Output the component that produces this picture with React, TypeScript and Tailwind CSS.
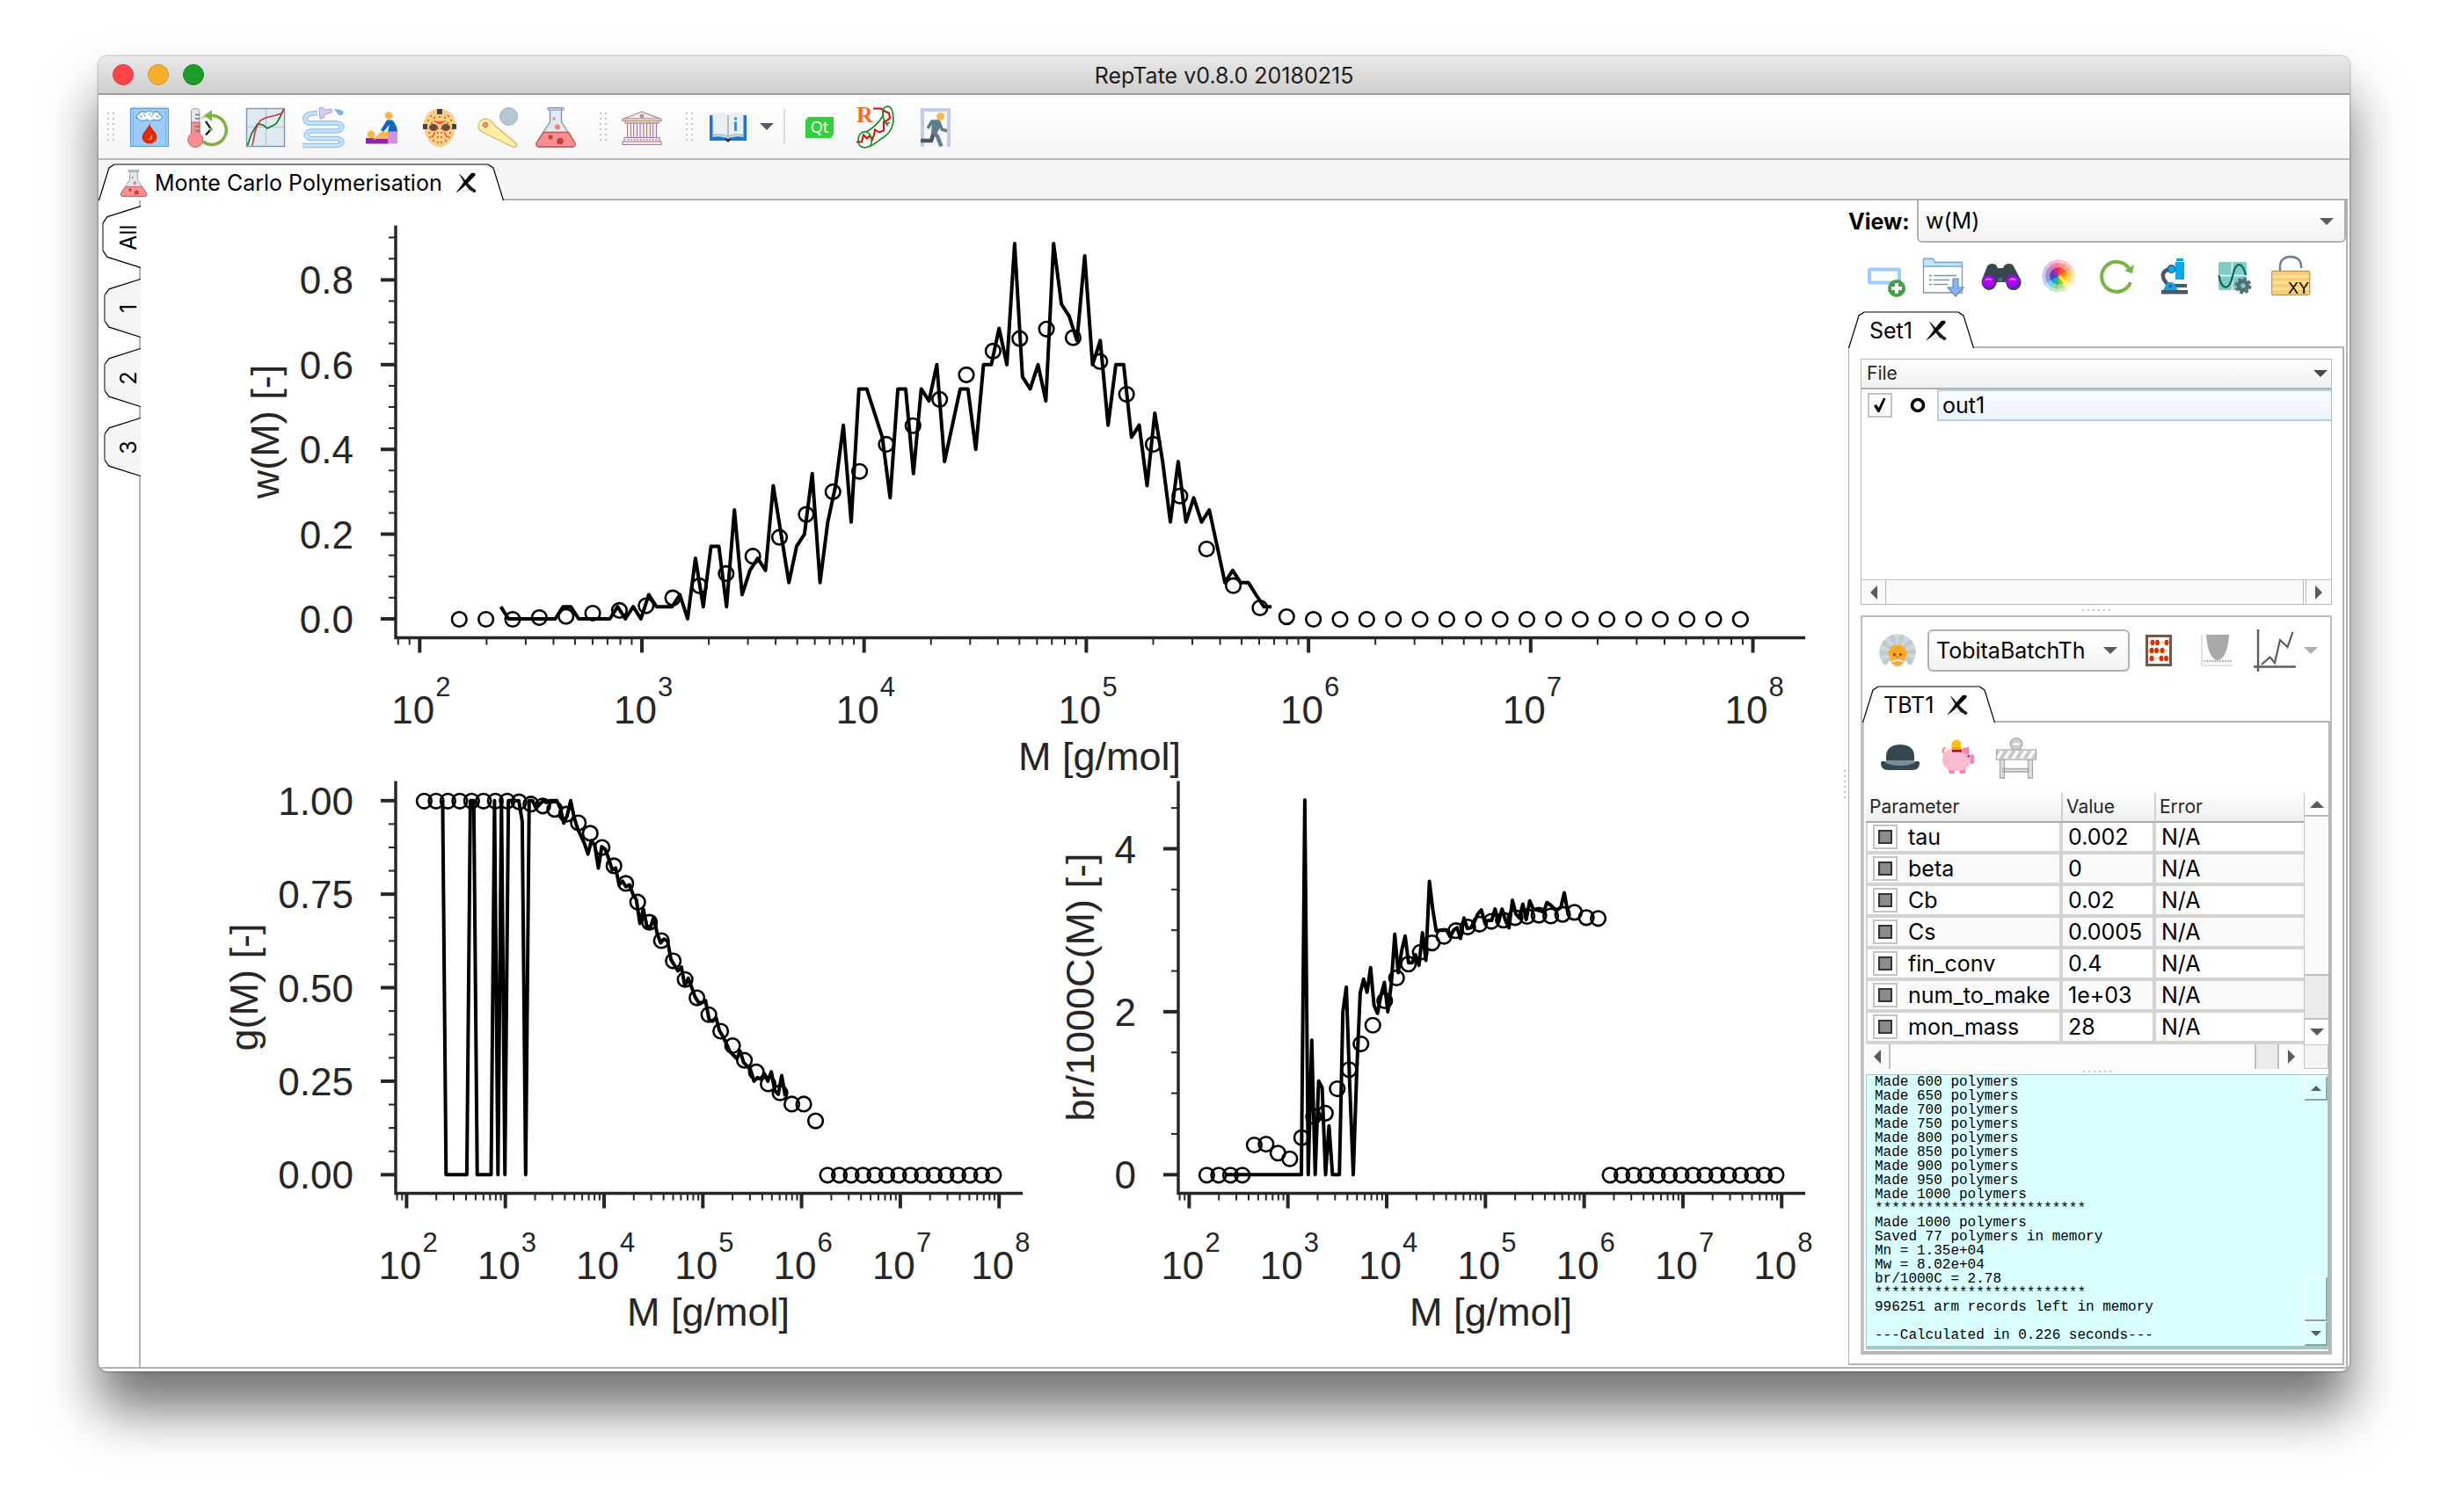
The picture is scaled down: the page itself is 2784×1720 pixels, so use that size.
import React from "react";

const UI = "font-[Inter,sans-serif]";

/* ------------------------------------------------------------------ */
/* Chart data                                                          */
/* ------------------------------------------------------------------ */

const LINE_START = 2.365;
const LINE_STEP = 0.03504;
const MARK_START = 2.178;
const MARK_STEP = 0.12012;
const BIN = 0.02857;

const zeros = (n: number) => Array.from({ length: n }, () => 0);

const wLine = [
  1, 0, 0, 0, 0, 0, 0, 0, 1, 1, 0, 0, 0, 0, 0, 1, 0, 1, 0, 2, 1, 1, 1, 2, 0, 5, 1, 6, 6, 1, 9, 2, 4, 5, 4, 11, 7, 3, 6, 7,
  12, 3, 8, 11, 16, 8, 19, 19, 17, 15, 10, 19, 19, 12, 19, 18, 21, 13, 16, 19, 19, 14, 21, 21, 24, 21, 31, 20, 19, 21, 18,
  31, 26, 25, 23, 30, 21, 23, 16, 21, 21, 15, 16, 11, 17, 13, 8, 13, 8, 10, 8, 9, 6, 3, 4, 3, 3, 2, 1, 1,
].map((n) => n * BIN);

const wMarks = [
  0, 0, 0, 0.004, 0.007, 0.0145, 0.021, 0.032, 0.0505, 0.079, 0.108, 0.149, 0.1936, 0.2476, 0.301, 0.349, 0.413, 0.457,
  0.519, 0.577, 0.633, 0.6625, 0.685, 0.6646, 0.6086, 0.531, 0.413, 0.291, 0.166, 0.0795, 0.027, 0.006, ...zeros(17),
];

const gLine = [
  1, 0, 0, 0, 0, 0, 0, 0, 1, 1, 0, 0, 0, 0, 0, 1, 0, 1, 0, 1, 1, 1, 1, 0.945, 0, 1, 1, 0.98, 0.99, 1, 0.995, 1, 1, 1, 0.98,
  0.94, 0.96, 1, 0.955, 0.925, 0.905, 0.885, 0.857, 0.893, 0.88, 0.82, 0.877, 0.87, 0.845, 0.815, 0.82, 0.775, 0.785, 0.77,
  0.775, 0.75, 0.735, 0.672, 0.71, 0.665, 0.66, 0.688, 0.645, 0.62, 0.63, 0.625, 0.575, 0.56, 0.545, 0.555, 0.505, 0.525,
  0.5, 0.475, 0.46, 0.46, 0.465, 0.415, 0.41, 0.42, 0.385, 0.37, 0.35, 0.33, 0.32, 0.31, 0.33, 0.3, 0.29, 0.28, 0.25, 0.26,
  0.255, 0.27, 0.25, 0.275, 0.225, 0.215, 0.265, 0.21,
];

const gMarks = [
  1, 1, 1, 1, 1, 1, 1, 1, 0.998, 0.992, 0.987, 0.978, 0.965, 0.942, 0.914, 0.876, 0.827, 0.78, 0.73, 0.676, 0.627, 0.573,
  0.523, 0.474, 0.429, 0.385, 0.346, 0.307, 0.276, 0.244, 0.22, 0.19, 0.19, 0.145, ...zeros(15),
];

const bLine = [
  ...zeros(23), 4.6, 0, 1.65, 0, 1.15, 1.07, 0, 0.6, 0, 0, 0, 2, 2.3, 1.1, 0, 1.25, 2.23, 2.4, 2.24, 2.54, 2.08, 1.98, 2.2,
  2.36, 2, 2.35, 2.95, 2.48, 2.75, 2.93, 2.6, 2.6, 2.7, 2.57, 2.97, 2.63, 3.6, 3.25, 2.99, 3, 3, 3, 2.92, 3, 3.03, 2.9,
  3.15, 3.02, 3.03, 3.1, 3.2, 3.25, 3.1, 3.12, 3.12, 3.26, 3.1, 3.26, 3.12, 3.03, 3.37, 3.2, 3.15, 3.32, 3.13, 3.36, 3.26,
  3.25, 3.24, 3.22, 3.34, 3.31, 3.27, 3.25, 3.28, 3.46, 3.22,
];

const bMarks = [
  0, 0, 0, 0, 0.37, 0.38, 0.27, 0.2, 0.46, 0.72, 0.76, 1.06, 1.295, 1.61, 1.84, 2.14, 2.42, 2.59, 2.735, 2.85, 2.93, 3,
  3.045, 3.08, 3.115, 3.13, 3.16, 3.175, 3.19, 3.18, 3.2, 3.225, 3.16, 3.15, ...zeros(15),
];

type PlotProps = {
  left: number;
  right: number;
  top: number;
  bottom: number;
  x2: number;
  decade: number;
  y0: number;
  unit: number;
  ticks: string[];
  minor: number;
  minorCount: number;
  line: number[];
  marks: number[];
  yLabel: string;
  yLabelX: number;
  tickX: number;
};

const INK = "#262626";

function Plot(p: PlotProps) {
  const px = (log: number) => p.x2 + (log - 2) * p.decade;
  const py = (v: number) => p.y0 - v * p.unit;
  const minorX: number[] = [Math.log10(80), Math.log10(90)];
  for (let d = 2; d < 8; d++) for (let m = 2; m < 10; m++) minorX.push(d + Math.log10(m));
  const midX = (p.left + p.right) / 2;
  const midY = (p.top + p.bottom) / 2;
  return (
    <g>
      <path
        d={"M" + p.line.map((v, i) => `${px(LINE_START + i * LINE_STEP).toFixed(1)} ${py(v).toFixed(1)}`).join("L")}
        fill="none"
        stroke="#000"
        strokeWidth={4}
        strokeLinejoin="round"
      />
      {p.marks.map((v, i) => (
        <circle key={i} cx={px(MARK_START + i * MARK_STEP)} cy={py(v) + 0.5} r={8.3} fill="none" stroke="#000" strokeWidth={2.6} />
      ))}
      <path d={`M${p.left} ${p.top}V${p.bottom}H${p.right}`} fill="none" stroke={INK} strokeWidth={3.4} />
      {minorX.map((l) => (
        <path key={l} d={`M${px(l)} ${p.bottom}v8`} stroke={INK} strokeWidth={2} />
      ))}
      {Array.from({ length: p.minorCount }, (_, i) => (
        <path key={i} d={`M${p.left} ${py(i * p.minor)}h-8`} stroke={INK} strokeWidth={2} />
      ))}
      {[2, 3, 4, 5, 6, 7, 8].map((e) => (
        <g key={e} fill={INK}>
          <path d={`M${px(e)} ${p.bottom}v17`} stroke={INK} strokeWidth={4} />
          <text x={px(e) - 32} y={p.bottom + 97} fontSize={44}>10</text>
          <text x={px(e) + 18} y={p.bottom + 66} fontSize={31}>{e}</text>
        </g>
      ))}
      {p.ticks.map((t) => (
        <g key={t} fill={INK}>
          <path d={`M${p.left} ${py(Number(t))}h-17`} stroke={INK} strokeWidth={4} />
          <text x={p.tickX} y={py(Number(t)) + 16} fontSize={44} textAnchor="end">{t}</text>
        </g>
      ))}
      <text x={midX - 1} y={p.bottom + 150} fontSize={45} textAnchor="middle" fill={INK}>M [g/mol]</text>
      <text transform={`translate(${p.yLabelX} ${midY}) rotate(-90)`} fontSize={45} textAnchor="middle" fill={INK}>
        {p.yLabel}
      </text>
    </g>
  );
}

function Figure() {
  return (
    <svg viewBox="160 228 1934 1326" className="h-full w-full font-['Liberation_Sans',Arial,sans-serif]" role="img" aria-label="Molecular weight distribution, g-factor and branching plots">
      <Plot left={450} right={2053} top={256} bottom={725} x2={477.3} decade={252.7} y0={703.5} unit={482}
        ticks={["0.0", "0.2", "0.4", "0.6", "0.8"]} minor={0.05} minorCount={19} line={wLine} marks={wMarks}
        yLabel="w(M) [-]" yLabelX={317} tickX={402} />
      <Plot left={450} right={1163} top={888} bottom={1357} x2={462.4} decade={112.3} y0={1335.8} unit={425.5}
        ticks={["0.00", "0.25", "0.50", "0.75", "1.00"]} minor={0.0625} minorCount={17} line={gLine} marks={gMarks}
        yLabel="g(M) [-]" yLabelX={293} tickX={402} />
      <Plot left={1340} right={2053} top={888} bottom={1357} x2={1352.4} decade={112.3} y0={1335.8} unit={92.7}
        ticks={["0", "2", "4"]} minor={0.5} minorCount={10} line={bLine} marks={bMarks}
        yLabel="br/1000C(M) [-]" yLabelX={1244} tickX={1292} />
    </svg>
  );
}

/* ------------------------------------------------------------------ */
/* Icons                                                               */
/* ------------------------------------------------------------------ */

function Icon({ children, className = "h-12 w-12" }: { children: React.ReactNode; className?: string }) {
  return (
    <svg viewBox="0 0 48 48" className={`overflow-visible ${className}`} fill="none" aria-hidden="true">
      {children}
    </svg>
  );
}

const WaxIcon = () => (
  <Icon>
    <rect x="3" y="1.5" width="42" height="4" fill="#c5dcf3" />
    <rect x="2.5" y="3.5" width="43" height="43" fill="#99ccfd" stroke="#5f9bd6" />
    <path d="M5.500 4v42M42.500 4v42" stroke="#7fb5ec" />
    <path d="M11 15c-3-1-2-5 1-5 0-3 5-4 7-2 3-2 7-2 9 0 4-2 8 0 8 3 3 0 3 4 0 5-2 2-6 1-7 0-2 2-6 2-8 0-3 2-8 2-10-1z" fill="#fff" stroke="#5d93cc" strokeWidth="1.200" />
    <path d="M17 9l3 4M29 9l-3 4M24 8v3M13 13l3-1M35 13l-4-1" stroke="#5d93cc" />
    <path d="M24 20.500c2 7 8.500 10 8.500 15.500a8.500 7.500 0 0 1-17 0c0-5.500 6.500-8.500 8.500-15.500z" fill="#dd2c00" />
    <path d="M26 33c0 3-1 5-4 6 4 1 7-2 4-6z" fill="#ff8a65" />
  </Icon>
);

const ThermoIcon = () => (
  <Icon>
    <path d="M17 15a15 15 0 0 1 9-4" stroke="#c5e1a5" strokeWidth="3.500" />
    <path d="M28 11.500a16.300 16.500 0 1 1-9 29.500" stroke="#7cb342" strokeWidth="3.500" />
    <path d="M20 11.500l9-6.500v13z" fill="#7cb342" />
    <path d="M22 18l6 9-6 6.500" stroke="#111" strokeWidth="2.200" />
    <circle cx="28" cy="27" r="2" fill="#7cb342" />
    <path d="M5.500 6a4.800 3 0 0 1 9.500 0v26h-9.500z" fill="#dfe9f1" stroke="#8a9cb0" />
    <path d="M5.500 19h9.500v13a8.500 8.500 0 1 1-9.500 0z" fill="#f78f8f" stroke="#cf6060" />
    <path d="M10 10.500h5M10 15h5M10 24h5M10 29h5" stroke="#7a6f85" strokeWidth="1.500" />
  </Icon>
);

const CurvesIcon = () => (
  <Icon>
    <rect x="2.500" y="3.500" width="43" height="43" fill="#dfe9f0" stroke="#8095aa" strokeWidth="1.400" />
    <path d="M24.500 4v42M3 24.500h42" stroke="#b9cbd9" strokeWidth="1.500" />
    <path d="M3.500 45.500L8 32l7-11 6 1 5 4 10-5 4-7 5-10" stroke="#0a7a18" strokeWidth="1.600" />
    <path d="M9 45.500L13 26l5-9 6-3 12-3 6-2 3-5" stroke="#c8373c" strokeWidth="1.600" />
  </Icon>
);

const HoseIcon = () => (
  <Icon>
    {[["#8fb8df", 5.6], ["#bfe4ff", 3.6]].map(([c, w]) => (
      <path key={c} d="M17 8.500C8 9 3 10 3 15s4 5 8 5h27c9 0 9 9 0 9H11c-9 0-9 8.500 0 8.500h27c9 0 9 8 0 8H0" stroke={c as string} strokeWidth={w as number} />
    ))}
    <path d="M19 3l4-1 2 3 8-1v4l-8 2-1 4-4 1z" fill="#d8cdf0" stroke="#a99bcb" />
    <path d="M36 4c5 0 11 1 10.500 4.500S41 12 40 9z" fill="#82aef0" />
  </Icon>
);

const MassageIcon = () => (
  <Icon>
    <circle cx="32" cy="11.500" r="4.400" fill="#ffb74d" />
    <path d="M30 16.500l6 0c3 3 6 8 6 13.500H31l2-8-7 8-3-2z" fill="#1565c0" />
    <rect x="6" y="37" width="26" height="6.500" fill="#8e24aa" />
    <rect x="31" y="29.500" width="11" height="14" fill="#ce93d8" />
    <circle cx="12" cy="33" r="4.400" fill="#ffb74d" />
    <path d="M17 36l6-6h8v8H19l-5 1z" fill="#ffb74d" />
  </Icon>
);

const MaskIcon = () => (
  <Icon>
    <path d="M24 4c12 0 18.500 8 18 19-.5 12-8 24-18 24S6.500 35 6 23C5.500 12 12 4 24 4z" fill="#ffcc80" />
    <path d="M21 4h6v6h-6zM5 21h5v6H5zM38 21h5v6h-5z" fill="#37474f" />
    <ellipse cx="17" cy="25" rx="5" ry="4" fill="#6d4c41" />
    <ellipse cx="31" cy="25" rx="5" ry="4" fill="#6d4c41" />
    <path d="M16 17l8 4.500 8-4.500-8 1.500zM18.500 30l1 1-4 6-1-1zM29.500 30l-1 1 4 6 1-1z" fill="#f44336" />
    <g fill="#8a6a4a">
      {[[14, 12], [18, 14], [30, 14], [34, 12], [11, 17], [37, 17], [15, 20], [33, 20], [22, 26], [26, 26], [22, 31], [26, 31], [12, 31], [36, 31], [22, 36], [26, 36], [17, 40], [31, 40], [22, 42], [26, 42], [24, 13], [13, 36], [35, 36]].map(([x, y]) => (
        <circle key={`${x}-${y}`} cx={x} cy={y} r="1" />
      ))}
    </g>
  </Icon>
);

const BatIcon = () => (
  <Icon>
    <path d="M2 24c0-6 6-11 12-8 3 2 5 4 7 7l24 20c2 3-1 5-4 4L10 32c-5-2-8-4-8-8z" fill="#fff0a3" stroke="#c6b57a" strokeWidth="1.200" />
    <circle cx="10" cy="22" r="2.800" fill="#f48f8f" stroke="#cf6060" />
    <circle cx="36.500" cy="12.500" r="10" fill="#b4c7d5" stroke="#9bb0c1" />
  </Icon>
);

const FlaskIcon = ({ className }: { className?: string }) => (
  <Icon className={className}>
    <path d="M17.500 4v14.500L2.500 42c-1.500 3 0 5 3 5h37c3 0 4.500-2 3-5L30.500 18.500V4z" fill="#dfe9f1" stroke="#8194a8" strokeWidth="1.300" />
    <path d="M10 30.500h28.500L45.500 42c1.500 3 0 5-3 5h-37c-3 0-4.500-2-3-5z" fill="#f79090" stroke="#c55252" strokeWidth="1.300" />
    <path d="M15 2.500h18v2.500H15z" fill="#c3d0db" stroke="#8194a8" />
    <circle cx="22" cy="15" r="1.800" fill="#f48080" />
    <circle cx="26" cy="24.500" r="3" fill="#f48080" />
    <circle cx="18" cy="36" r="2.500" fill="#c83c3c" />
    <circle cx="29" cy="40.500" r="3.800" fill="#c83c3c" />
  </Icon>
);

const MuseumIcon = () => (
  <Icon>
    <g fill="#fbebcb" stroke="#9a79b5" strokeWidth="1.100">
      <path d="M2 15.500L24 7l22 8.500v2H2z" />
      <path d="M4 15h40" />
      <circle cx="24" cy="12" r="1.800" fill="#b9a1d6" />
      <path d="M5 17.500h38v2.500H5z" />
      {[7.500, 14.500, 22, 29.500, 36.500].map((x) => (
        <rect key={x} x={x} y="20" width="4" height="16.500" />
      ))}
      <path d="M4 36.500h40v4.500H4zM2 41h44v3.500H2z" />
    </g>
    <path d="M8 38.800h33" stroke="#9a79b5" strokeWidth="1.600" strokeDasharray="1.300 2.200" />
  </Icon>
);

const BookIcon = () => (
  <Icon>
    <rect x="3" y="11" width="42" height="29" fill="#1976d2" />
    <path d="M21 36h6v3.500l-3 2.500-3-2.500z" fill="#263238" />
    <path d="M6.500 8.500C12 7 20 8 24 11c4-3 12-4 17.500-2.500V36C36 34.500 28 35 24 38c-4-3-12-3.500-17.500-2z" fill="#eceff1" />
    <path d="M24 11v27" stroke="#b0bec5" strokeWidth="2" />
    <path d="M6.500 34c6-1 14-1 17.500 2 3.500-3 11.500-3 17.500-2" stroke="#b0bec5" strokeWidth="2" />
    <circle cx="32.500" cy="15" r="1.700" fill="#2196f3" />
    <path d="M32.500 18.500V29" stroke="#2196f3" strokeWidth="3" />
  </Icon>
);

const QtIcon = () => (
  <Icon>
    <path d="M11 13h29v20l-3 4H8V17z" fill="#2fd13c" />
    <text x="24" y="31" textAnchor="middle" fontSize="18" fill="#fff" className="font-['Noto_Sans',sans-serif]">Qt</text>
  </Icon>
);

const RepTateIcon = () => (
  <Icon>
    <text x="0" y="19" fontSize="26" fontWeight="bold" fill="#ff6a1a" className="font-['Liberation_Serif',serif]">R</text>
    <path d="M19 3.500h9l4 3 5 2 1 6-4 3-3 1v10l-5 2-5-3-1 6-2 5-3-4-3 3-4-4-2 8H0" stroke="#dd0a0a" strokeWidth="2" />
    <path d="M11 30c8-4 14-10 19-18 0-8 1-11 6-11 5 1 6 8 6 17-1 8-5 14-11 18-8 5-12 11-22 12-5-1-7-3-7-8 0-6 3-11 9-10 5 1 8 9 5 15" stroke="#0c8a16" strokeWidth="1.600" />
    <path d="M30 4c0 8 0 14 6 19M34 20h4" stroke="#0c8a16" strokeWidth="1.600" />
  </Icon>
);

const ExitIcon = () => (
  <Icon>
    <path d="M9 47V5h30v42" stroke="#c5cae9" strokeWidth="4" />
    <path d="M22 31l-3 9H7" stroke="#455a64" strokeWidth="4.500" />
    <path d="M28 18l-8 0-5 8M28 19l3 8 6 2" stroke="#607d8b" strokeWidth="3.600" />
    <path d="M20 17h9l1 6-4 8-7 1z" fill="#607d8b" />
    <path d="M21 30l5 5 4.500 11.500" stroke="#607d8b" strokeWidth="4.500" />
    <circle cx="29.500" cy="12.500" r="4.600" fill="#ffb74d" />
  </Icon>
);

const AddDataIcon = () => (
  <Icon>
    <rect x="5" y="15.500" width="34" height="15" rx="1" stroke="#9accff" strokeWidth="4" />
    <circle cx="36" cy="37" r="10" fill="#43a047" />
    <path d="M36 31v12M30 37h12" stroke="#fff" strokeWidth="4" />
  </Icon>
);

const FolderIcon = () => (
  <Icon>
    <path d="M.5 8V3.500h11l2 4h31V42H.5z" fill="#fff" stroke="#8094ad" strokeWidth="1.300" />
    <path d="M.5 12V3.500h11l2 4h31V12z" fill="#c4e6ff" stroke="#7ba6d6" strokeWidth="1.300" />
    <path d="M12 22.500h26M12 27.500h18M12 32.500h16" stroke="#8094ad" strokeWidth="1.600" />
    <path d="M7 22.500h3M7 27.500h3M7 32.500h3" stroke="#8094ad" strokeWidth="1.600" />
    <path d="M34 26h6v10h6l-9 10-9-10h6z" fill="#8ab4f0" stroke="#5a86c8" strokeWidth="1.200" />
  </Icon>
);

const BinocularsIcon = () => (
  <Icon>
    <path d="M7 12c1-4 10-4 11 0l1 2h6l1-2c1-4 10-4 11 0l8 15c2 6-2 12-8 12s-8-4-9-9h-10c-1 5-4 9-9 9s-10-6-8-12z" fill="#37474f" />
    <circle cx="22" cy="27" r="2.500" fill="#546e7a" />
    <circle cx="8.500" cy="29" r="7.300" fill="#aa00ff" />
    <circle cx="36" cy="29" r="7.300" fill="#aa00ff" />
    <path d="M5 28c1-2 5-3 7 0M32.500 28c1-2 5-3 7 0" stroke="#ea80fc" strokeWidth="1.600" />
  </Icon>
);

const WHEEL = ["#f44336", "#ff5722", "#ff9800", "#ffc107", "#ffeb3b", "#8bc34a", "#4caf50", "#03a9f4", "#3f51b5", "#673ab7", "#9c27b0", "#e91e63"];
const wedge = (i: number, r: number) => {
  const a = ((i * 30 - 90) * Math.PI) / 180;
  const b = a + Math.PI / 6;
  return `M22 23L${22 + r * Math.cos(a)} ${23 + r * Math.sin(a)}L${22 + r * Math.cos(b)} ${23 + r * Math.sin(b)}Z`;
};
const WheelIcon = () => (
  <Icon>
    {[[19, 0.3], [15, 0.4], [10, 1]].map(([r, o]) =>
      WHEEL.map((c, i) => <path key={`${r}-${c}`} d={wedge(i, r)} fill={c} opacity={o} />),
    )}
  </Icon>
);

const ReloadIcon = () => (
  <Icon>
    <path d="M36 14a17 17 0 1 0 2 16" stroke="#7cb342" strokeWidth="4" />
    <path d="M42 10l-2 10-9-3z" fill="#7cb342" />
  </Icon>
);

const MicroscopeIcon = () => (
  <Icon>
    <path d="M19 15c-8 0-11 5-10 9 1 5 4 6 5 9" stroke="#455a64" strokeWidth="4.500" />
    <path d="M24 3h8v3h-8zM23 7h10v20H23z" fill="#03a9f4" />
    <circle cx="18.500" cy="15" r="4.300" fill="#03a9f4" stroke="#455a64" strokeWidth="1.500" />
    <path d="M20 32h16v4H20zM7 39h30v4.500H7z" fill="#455a64" />
    <path d="M14 30h6l6 9H9z" fill="#03a9f4" />
    <circle cx="17" cy="34.500" r="2" fill="#455a64" />
  </Icon>
);

const SignalIcon = () => (
  <Icon>
    <rect x="6" y="7" width="32" height="32" rx="2" fill="#80cbc4" />
    <path d="M21.500 7v32M6 22.500h32" stroke="#fff" strokeWidth="1.400" />
    <path d="M6.500 22c3 18 12 18 15.500 1s11-17 15-1" stroke="#00695c" strokeWidth="2.200" />
    <circle cx="34" cy="34" r="8" stroke="#546e7a" strokeWidth="3" strokeDasharray="3.600 2.680" />
    <circle cx="34" cy="34" r="5" stroke="#546e7a" strokeWidth="5" />
    <circle cx="34" cy="34" r="2.600" fill="#80cbc4" />
  </Icon>
);

const LockIcon = () => (
  <Icon>
    <path d="M10 17v-5C10 5 15 1 22 1s12 4 12 11v2" stroke="#66809b" strokeWidth="2.500" />
    <rect x=".7" y="17.500" width="43" height="27" rx="1.500" fill="#ffe08f" stroke="#b8975a" strokeWidth="1.300" />
    <path d="M1.500 20h41.500M1.500 27h41.500M1.500 34h41.500M1.500 41h41.500" stroke="#f5cb78" strokeWidth="3.500" />
    <text x="19" y="43" fontSize="18" fill="#000" className="font-['Liberation_Sans',sans-serif]">XY</text>
  </Icon>
);

const EinsteinIcon = () => (
  <Icon>
    {Array.from({ length: 15 }, (_, i) => (
      <path key={i} d="M24 26L20 6.500Q24 3.500 28 6.500Z" transform={`rotate(${i * 18 - 126} 24 26)`} fill={i % 2 ? "#cfd8dc" : "#bfcbd1"} />
    ))}
    <path d="M15 24c0-5 4-6 9-6s9 1 9 6c3 1 2 6 0 6 0 7-4 12-9 12s-9-5-9-12c-2 0-3-5 0-6z" fill="#ffa726" />
    <circle cx="20.500" cy="28.500" r="1.500" fill="#784719" />
    <circle cx="27.500" cy="28.500" r="1.500" fill="#784719" />
    <path d="M17 37c1-4 13-4 14 0-3 1-4-1-7-1s-4 2-7 1z" fill="#eceff1" />
    <path d="M21 30l3 3 3-3z" fill="#ef8a14" />
  </Icon>
);

const AbacusIcon = () => (
  <Icon>
    <rect x="10.500" y="7.500" width="27" height="33" fill="#fff" stroke="#795548" strokeWidth="3" />
    {[[15, [17, 22.500, 33]], [24, [16, 21.500, 28]], [33, [16, 27, 32.500]]].map(([y, xs]) => (
      <g key={y as number}>
        <path d={`M12 ${y}h24`} stroke="#ffcc80" strokeWidth="1.600" />
        {(xs as number[]).map((x) => (
          <ellipse key={x} cx={x} cy={y as number} rx="2.400" ry="3.200" fill="#dd2c00" />
        ))}
      </g>
    ))}
  </Icon>
);

const FitLimitsIcon = () => (
  <Icon>
    <path d="M7 6v35h35" stroke="#e2e2e2" strokeWidth="2" />
    <path d="M12 6h26c-1 17-6 29-13 29S13 23 12 6z" fill="#a9a9a9" />
    <path d="M9 36h32" stroke="#b5b5b5" strokeWidth="2" strokeDasharray="2 1" />
  </Icon>
);

const LineChartIcon = () => (
  <Icon>
    <path d="M5 0v48M0 42.500h48" stroke="#5c5c5c" strokeWidth="2.400" />
    <path d="M9 40l9.500-8.500L24 38l6-26 8.500 8 6-17" stroke="#5c5c5c" strokeWidth="2.200" />
  </Icon>
);

const HatIcon = () => (
  <Icon>
    <path d="M2 30c0-3 4-2 7-1h30c3-1 7-2 7 1 0 5-3 8-8 8H10c-5 0-8-3-8-8z" fill="#37474f" />
    <path d="M8 29V22C8 13 15 9 24 9s16 4 16 13v7z" fill="#37474f" />
    <path d="M8 27h32v3c-8 4-24 4-32 0z" fill="#78909c" />
  </Icon>
);

const PigIcon = () => (
  <Icon>
    <path d="M9 19c-4-1-3-6 1-6" stroke="#ff80ab" strokeWidth="2" />
    <path d="M12 35h8v7h-6zM24 35h8v7h-6z" fill="#ff80ab" />
    <path d="M6 26c0-9 7-13 15-13 6 0 9 1 12 3 4 2 6 5 7 9v5c-3 1-4 2-6 5-3 3-8 4-13 4-8 0-15-4-15-13z" fill="#f8bbd0" />
    <path d="M28 15c2-3 5-3 8-3v8c-3 1-6-1-8-5z" fill="#ff80ab" />
    <rect x="38" y="20" width="4" height="11" rx="2" fill="#ff80ab" />
    <rect x="34.500" y="21" width="2.500" height="2.500" fill="#3f51b5" />
    <path d="M17 15h11v2.500H17z" fill="#880e4f" />
    <path d="M16.500 9a5.500 5.500 0 0 1 11 0v6h-11z" fill="#ffc107" />
    <path d="M17 12h10v3H17z" fill="#ff9800" />
  </Icon>
);

const BarrierIcon = () => (
  <Icon>
    <g fill="#e0e0e0" stroke="#a8a8a8" strokeWidth="1.300">
      <path d="M9 36.500h29v3.500H9zM5.500 26h5v21h-5zM37.500 26h5v21h-5z" />
      <circle cx="24" cy="8.500" r="6.800" fill="#cfcfcf" />
      <rect x="1.500" y="15" width="45" height="11" fill="#fff" />
    </g>
    <path d="M20.500 8.500h7" stroke="#fff" strokeWidth="2.200" />
    <path d="M2 15.600h4l-4 7zM10 15.600h5l-6 9.800H4zM19 15.600h5l-6 9.800h-5zM28 15.600h5l-6 9.800h-5zM37 15.600h5l-6 9.800h-5zM46 17v8.400h-6z" fill="#c9c9c9" />
  </Icon>
);

const CloseGlyph = () => (
  <svg viewBox="0 0 26 24" className="h-6 w-[26px]" fill="none" aria-hidden="true">
    <path d="M5 1.500C8 3 18 17 24 20c1 1 0 3-2 3-5 0-12-12-17-21.500z" fill="#1c1c1c" />
    <path d="M19 1c3-1 6 0 4 3C16 11 8 20 1 23.500 6 18 12 8 19 1z" fill="#000" />
    <path d="M9 22c4-2 8-2 12 .5" stroke="#ddd" strokeWidth="1.200" />
  </svg>
);

/* ------------------------------------------------------------------ */
/* Small parts                                                         */
/* ------------------------------------------------------------------ */

function Grip() {
  return (
    <span className="grid grid-cols-2 gap-1" aria-hidden="true">
      {Array.from({ length: 12 }, (_, i) => (
        <span key={i} className="size-0.5 bg-[#c4c4c4]" />
      ))}
    </span>
  );
}

function Dots({ vertical = false }: { vertical?: boolean }) {
  return (
    <span className={vertical ? "flex flex-col gap-1" : "flex gap-1"} aria-hidden="true">
      {Array.from({ length: 6 }, (_, i) => (
        <span key={i} className="size-0.5 bg-[#c4c4c4]" />
      ))}
    </span>
  );
}

const ARROWS = { down: "M0 4h16l-8 8z", up: "M0 12h16L8 4z", left: "M12 0v16L4 8z", right: "M4 0v16l8-8z" };
function Arrow({ dir, className = "size-4 fill-[#5b5b5b]" }: { dir: keyof typeof ARROWS; className?: string }) {
  return (
    <svg viewBox="0 0 16 16" className={className} aria-hidden="true">
      <path d={ARROWS[dir]} />
    </svg>
  );
}

function ToolButton({ label, children }: { label: string; children: React.ReactNode }) {
  return (
    <button type="button" aria-label={label} title={label} className="flex w-[66px] shrink-0 items-center justify-center">
      {children}
    </button>
  );
}

function FolderTab({ label, icon }: { label: string; icon?: React.ReactNode }) {
  return (
    <div className="relative z-10 -mb-0.5 flex h-[42px]" role="tablist">
      <svg viewBox="0 0 18 42" className="h-full w-[18px]" aria-hidden="true">
        <path d="M.5 42L12 5l6-4v41z" fill="#fff" />
        <path d="M.5 42L12 5l6-4" fill="none" stroke="#000" strokeWidth="1.200" />
      </svg>
      <div className="flex items-center gap-3.5 border-t-2 border-[#808080] bg-white pr-3 pl-1.5">
        <button type="button" role="tab" aria-selected="true" className="flex items-center gap-2 text-[25px] leading-8">
          {icon}
          {label}
        </button>
        <button type="button" aria-label={`Close ${label}`}>
          <CloseGlyph />
        </button>
      </div>
      <svg viewBox="0 0 18 42" className="h-full w-[18px]" aria-hidden="true">
        <path d="M0 1l6 4 11.500 37H0z" fill="#fff" />
        <path d="M0 1l6 4 11.500 37" fill="none" stroke="#000" strokeWidth="1.200" />
      </svg>
    </div>
  );
}

function SideTab({ label, active = false }: { label: string; active?: boolean }) {
  return (
    <button type="button" role="tab" aria-selected={active} className={active ? "relative h-[71px] w-11" : "relative h-[67px] w-11"}>
      <svg viewBox="0 0 44 68" preserveAspectRatio="none" className="absolute inset-0 h-full w-full" aria-hidden="true">
        <path d={active ? "M44 0L6 11 1 18v32l5 7 38 11z" : "M44 0L8 12 3 19v30l5 7 36 12z"} fill={active ? "#fff" : "#f5f5f5"} />
        <path d={active ? "M44 .5L6 12 1 19M1 49l5 7 38 11.500" : "M44 .5L8 12 3 19M3 49l5 7 36 11.500"} fill="none" stroke="#000" strokeWidth="1.200" />
        <path d={active ? "M1 19v30" : "M3 19v30"} stroke="#808080" strokeWidth="2" />
      </svg>
      <span className="absolute inset-0 flex items-center justify-center pl-4 text-[25px] leading-7">
        <span className="-rotate-90">{label}</span>
      </span>
    </button>
  );
}

const LINE = "border-[#b2b2b2]";

/* ------------------------------------------------------------------ */
/* Dock panels                                                         */
/* ------------------------------------------------------------------ */

function FileTree() {
  return (
    <section className="flex h-[280px] flex-col border border-[#b8b8b8] bg-white">
      <table className="w-full border-separate border-spacing-0 text-left">
        <thead>
          <tr>
            <th colSpan={3} scope="col" className="h-[34px] border-b-2 border-[#b0b0b0] bg-gradient-to-b from-white to-[#f0f0f0] p-0 font-normal">
              <span className="flex items-center justify-between pr-1 pl-1.5 text-[21px] leading-7 text-[#262626]">
                File
                <Arrow dir="down" className="size-4 fill-[#4a4a4a]" />
              </span>
            </th>
          </tr>
        </thead>
        <tbody>
          <tr className="text-[25px] leading-8">
            <td className="w-[86px] p-0">
              <span className="flex items-center gap-5 pl-[7px]">
                <span className="relative flex">
                  <input type="checkbox" defaultChecked aria-label="Show out1" className="size-7 appearance-none border-2 border-[#c2c2c2] bg-white" />
                  <svg viewBox="0 0 28 28" className="pointer-events-none absolute inset-0" aria-hidden="true">
                    <path d="M7 14.500l3-1.500 2.500 4L18 5.500l2.500 1L13.500 22h-2z" fill="#000" />
                  </svg>
                </span>
                <svg viewBox="0 0 18 18" className="size-[18px]" aria-hidden="true">
                  <circle cx="9" cy="9" r="6.500" fill="none" stroke="#000" strokeWidth="3.600" />
                </svg>
              </span>
            </td>
            <td className="h-9 border-2 border-r-0 border-[#b9d0ea] bg-gradient-to-b from-[#f8fbff] to-[#eaf3fd] py-0 pl-1">out1</td>
          </tr>
        </tbody>
      </table>
      <div className="mt-auto flex h-7 items-stretch border-t border-[#c4c4c4] bg-gradient-to-b from-[#f8f8f8] to-[#fcfcfc]">
        <button type="button" aria-label="Scroll left" className="flex w-7 items-center justify-center border-r border-[#b8b8b8]">
          <Arrow dir="left" />
        </button>
        <span className="flex-1" />
        <span className="w-1 border-x border-[#b8b8b8]" />
        <button type="button" aria-label="Scroll right" className="flex w-7 items-center justify-center">
          <Arrow dir="right" />
        </button>
      </div>
    </section>
  );
}

const PARAMETERS: [string, string][] = [
  ["tau", "0.002"],
  ["beta", "0"],
  ["Cb", "0.02"],
  ["Cs", "0.0005"],
  ["fin_conv", "0.4"],
  ["num_to_make", "1e+03"],
  ["mon_mass", "28"],
];

function ParameterTable() {
  const th = "h-[34px] border-b-2 border-b-[#a9a9a9] bg-gradient-to-b from-white to-[#efefef] p-0 pl-1 text-[21px] leading-7 font-normal text-[#262626]";
  const td = "h-9 border-b-4 border-[#d3d3d3] p-0 pl-1.5";
  return (
    <div className="grid grid-cols-[1fr_28px]">
      <table className="w-full table-fixed border-separate border-spacing-0 text-left">
        <thead>
          <tr>
            <th scope="col" className={`${th} w-[224px] border-r-2 border-r-[#d0d0d0]`}>Parameter</th>
            <th scope="col" className={`${th} w-[106px] border-r-2 border-r-[#d0d0d0]`}>Value</th>
            <th scope="col" className={th}>Error</th>
          </tr>
        </thead>
        <tbody className="text-[25px] leading-8">
          {PARAMETERS.map(([name, value], i) => (
            <tr key={name} className={i % 2 ? "bg-[#fafafa]" : "bg-white"}>
              <td className="h-9 border-r-4 border-b-4 border-l-2 border-[#d3d3d3] p-0 pl-1.5">
                <label className="flex items-center gap-3">
                  <span className="relative flex">
                    <input type="checkbox" className="size-7 appearance-none border-2 border-[#c4c4c4] bg-white" />
                    <span className="pointer-events-none absolute inset-1.5 border-2 border-[#333] bg-[#8a8a8a]" />
                  </span>
                  {name}
                </label>
              </td>
              <td className={`${td} border-r-4`}>{value}</td>
              <td className={td}>N/A</td>
            </tr>
          ))}
        </tbody>
      </table>
      <div className="flex flex-col border-l border-[#c4c4c4] bg-[#fafafa]">
        <button type="button" aria-label="Scroll up" className="flex h-[27px] items-center justify-center border-b-2 border-[#b8b8b8] bg-white">
          <Arrow dir="up" />
        </button>
        <span className="flex-1" />
        <span className="h-[52px] border-y-2 border-[#c0c0c0] bg-[#ebebeb]" />
        <button type="button" aria-label="Scroll down" className="flex h-7 items-center justify-center bg-white">
          <Arrow dir="down" />
        </button>
      </div>
      <div className="flex h-7 items-stretch bg-[#fbfbfb]">
        <button type="button" aria-label="Scroll left" className="flex w-7 items-center justify-center border-r-2 border-[#c0c0c0]">
          <Arrow dir="left" />
        </button>
        <span className="flex-1" />
        <span className="w-7 border-x-2 border-[#c0c0c0] bg-[#ebebeb]" />
        <button type="button" aria-label="Scroll right" className="flex w-7 items-center justify-center">
          <Arrow dir="right" />
        </button>
      </div>
      <span className="border border-[#c4c4c4] bg-[#f5f5f5]" />
    </div>
  );
}

const LOG = `Made 600 polymers
Made 650 polymers
Made 700 polymers
Made 750 polymers
Made 800 polymers
Made 850 polymers
Made 900 polymers
Made 950 polymers
Made 1000 polymers
*************************
Made 1000 polymers
Saved 77 polymers in memory
Mn = 1.35e+04
Mw = 8.02e+04
br/1000C = 2.78
*************************
996251 arm records left in memory

---Calculated in 0.226 seconds---`;

function Console() {
  const box = "border-2 border-t-white border-l-white border-r-[#8fb0b0] border-b-[#8fa0a0]";
  return (
    <section className="flex min-h-0 flex-1 border border-b-4 border-[#a3c8c8] bg-[#d9ffff]">
      <pre className="min-w-0 flex-1 overflow-hidden pl-[9px] font-['Liberation_Mono','Courier_New',monospace] text-base leading-4 text-black">{LOG}</pre>
      <div className="flex w-[27px] flex-col">
        <button type="button" aria-label="Scroll log up" className={`mt-px flex h-7 items-center justify-center ${box}`}>
          <Arrow dir="up" className="size-3 fill-[#54605f]" />
        </button>
        <span className="flex-1" />
        <span className={`h-[51px] ${box}`} />
        <button type="button" aria-label="Scroll log down" className={`flex h-7 items-center justify-center ${box}`}>
          <Arrow dir="down" className="size-3 fill-[#54605f]" />
        </button>
      </div>
    </section>
  );
}

function TheoryPanel() {
  return (
    <section className="flex min-h-0 flex-1 flex-col border-2 border-[#bdbdbd] bg-white">
      <div className="flex h-[76px] items-center">
        <div className="flex w-[74px] justify-end pr-2.5">
          <button type="button" aria-label="New theory"><EinsteinIcon /></button>
        </div>
        <div className="relative">
          <select aria-label="Theory" className="h-12 w-[230px] appearance-none rounded-md border-2 border-[#b0b0b0] bg-gradient-to-b from-white to-[#f3f3f3] pl-2 text-[25px] leading-8">
            <option>TobitaBatchTh</option>
          </select>
          <Arrow dir="down" className="pointer-events-none absolute top-4 right-3.5 size-4 fill-[#5b5b5b]" />
        </div>
        <ToolButton label="Calculate"><AbacusIcon /></ToolButton>
        <ToolButton label="Minimize"><FitLimitsIcon /></ToolButton>
        <ToolButton label="Limits"><LineChartIcon /></ToolButton>
        <button type="button" aria-label="Limits menu"><Arrow dir="down" className="size-4 fill-[#b0b0b0]" /></button>
      </div>
      <div className="mt-0.5 flex">
        <FolderTab label="TBT1" />
      </div>
      <div className="flex min-h-0 flex-1 flex-col border-2 border-[#b4b4b4] border-l-[#c4c4c4] pb-0.5 pl-0.5">
        <div className="flex h-20 shrink-0 items-stretch pl-1.5">
          <ToolButton label="Theory options"><HatIcon /></ToolButton>
          <ToolButton label="Save"><PigIcon /></ToolButton>
          <ToolButton label="Stop"><BarrierIcon /></ToolButton>
        </div>
        <ParameterTable />
        <div className="flex h-1.5 shrink-0 items-center justify-center"><Dots /></div>
        <Console />
      </div>
    </section>
  );
}

function Dock() {
  return (
    <aside className="flex w-[566px] shrink-0 flex-col">
      <div className="flex h-12 items-center justify-between">
        <label htmlFor="view" className="text-[25px] leading-8 font-bold">View:</label>
        <div className="relative h-full">
          <select id="view" className="h-full w-[488px] appearance-none rounded-b-md border-2 border-t-0 border-[#b0b0b0] bg-gradient-to-b from-white to-[#f3f3f3] pl-2 text-[25px] leading-8">
            <option>w(M)</option>
          </select>
          <Arrow dir="down" className="pointer-events-none absolute top-4 right-3.5 size-4 fill-[#5b5b5b]" />
        </div>
      </div>
      <div className="flex h-[78px] items-stretch pl-2.5">
        <ToolButton label="New dataset"><AddDataIcon /></ToolButton>
        <ToolButton label="Open files"><FolderIcon /></ToolButton>
        <ToolButton label="Inspect"><BinocularsIcon /></ToolButton>
        <ToolButton label="Markers"><WheelIcon /></ToolButton>
        <ToolButton label="Reload"><ReloadIcon /></ToolButton>
        <ToolButton label="Microscope"><MicroscopeIcon /></ToolButton>
        <ToolButton label="Tools"><SignalIcon /></ToolButton>
        <ToolButton label="Lock XY"><LockIcon /></ToolButton>
      </div>
      <div className="flex">
        <FolderTab label="Set1" />
      </div>
      <div className={`mr-0.5 mb-0.5 flex min-h-0 flex-1 flex-col border-2 border-l ${LINE} pt-3 pr-3 pb-2.5 pl-[13px]`}>
        <FileTree />
        <div className="flex h-3 shrink-0 items-center justify-center"><Dots /></div>
        <TheoryPanel />
      </div>
    </aside>
  );
}

/* ------------------------------------------------------------------ */
/* Application window                                                  */
/* ------------------------------------------------------------------ */

export default function App() {
  return (
    <main className={`flex h-screen flex-col bg-white px-28 pt-16 pb-40 text-black ${UI}`}>
      <div className="flex min-h-0 flex-1 flex-col overflow-hidden rounded-[10px] bg-white shadow-[0_0_3px_rgba(0,0,0,0.5),0_44px_60px_rgba(0,0,0,0.55)]">
        <header className="relative flex h-11 shrink-0 items-center justify-center border-b-2 border-[#9b9b9b] bg-gradient-to-b from-[#e9e9e9] to-[#cfcfcf]">
          <div className="absolute left-4 flex gap-4">
            <button type="button" aria-label="Close" className="size-6 rounded-full border border-[#dd3a3e] bg-[#fd4549]" />
            <button type="button" aria-label="Minimize" className="size-6 rounded-full border border-[#d0952a] bg-[#f5ae2d]" />
            <button type="button" aria-label="Zoom" className="size-6 rounded-full border border-[#138420] bg-[#1a9d29]" />
          </div>
          <h1 className="pt-0.5 text-[25px] leading-8 text-[#1c1c1c]">RepTate v0.8.0 20180215</h1>
        </header>

        <nav className="flex h-[74px] shrink-0 items-stretch border-b-2 border-[#bdbdbd] bg-gradient-to-b from-white to-[#f5f5f5]">
          <span className="flex items-center pr-[7px] pl-2.5"><Grip /></span>
          <ToolButton label="MWD"><WaxIcon /></ToolButton>
          <ToolButton label="TTS"><ThermoIcon /></ToolButton>
          <ToolButton label="LVE"><CurvesIcon /></ToolButton>
          <ToolButton label="NLVE"><HoseIcon /></ToolButton>
          <ToolButton label="Creep"><MassageIcon /></ToolButton>
          <ToolButton label="SANS"><MaskIcon /></ToolButton>
          <ToolButton label="Dielectric"><BatIcon /></ToolButton>
          <ToolButton label="React"><FlaskIcon /></ToolButton>
          <span className="flex items-center pr-[7px] pl-[17px]"><Grip /></span>
          <ToolButton label="Materials"><MuseumIcon /></ToolButton>
          <span className="flex items-center pr-[7px] pl-[17px]"><Grip /></span>
          <ToolButton label="Help"><BookIcon /></ToolButton>
          <button type="button" aria-label="Help menu" className="flex w-[22px] items-center justify-center"><Arrow dir="down" /></button>
          <span className="mr-1.5 ml-2 h-10 w-0.5 self-center bg-[#dcdcdc]" />
          <ToolButton label="About Qt"><QtIcon /></ToolButton>
          <ToolButton label="About RepTate"><RepTateIcon /></ToolButton>
          <ToolButton label="Exit"><ExitIcon /></ToolButton>
        </nav>

        <div className="flex shrink-0 bg-[#f5f5f5] pt-1">
          <FolderTab label="Monte Carlo Polymerisation" icon={<FlaskIcon className="size-8" />} />
        </div>

        <div className={`mr-0.5 mb-[3px] flex min-h-0 flex-1 border-t-2 border-r-2 border-b-2 ${LINE}`}>
          <div className="flex w-12 shrink-0 flex-col">
            <div className="flex flex-col items-end gap-3 bg-[linear-gradient(#b2b2b2,#b2b2b2)] bg-[length:2px_100%] bg-right bg-no-repeat pt-1.5" role="tablist" aria-label="Plots">
              <SideTab label="All" active />
              <SideTab label="1" />
              <SideTab label="2" />
              <SideTab label="3" />
            </div>
            <div className={`flex-1 border-r-2 ${LINE}`} />
          </div>
          <div className="min-h-0 min-w-0 flex-1">
            <Figure />
          </div>
          <div className="flex w-2 shrink-0 items-center justify-center"><Dots vertical /></div>
          <Dock />
        </div>
      </div>
    </main>
  );
}
